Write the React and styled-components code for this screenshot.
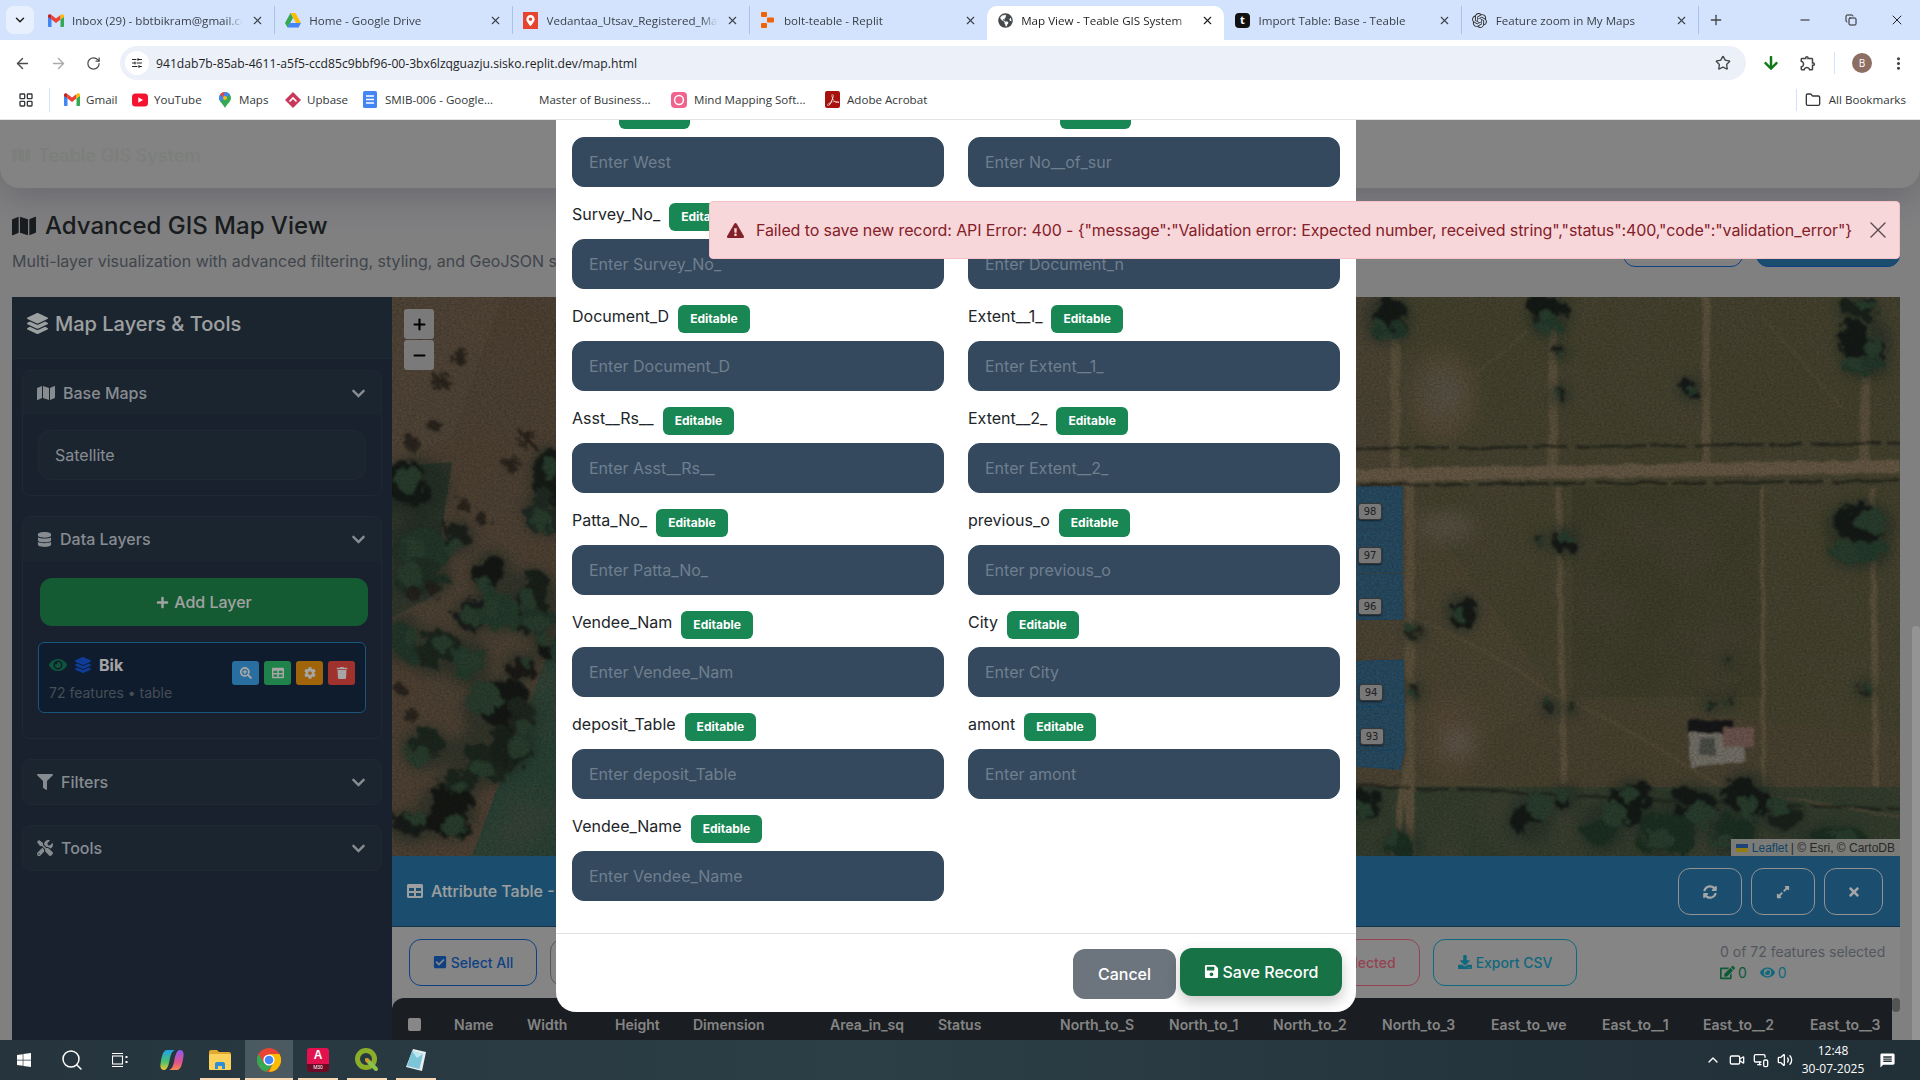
import styled, { createGlobalStyle } from "styled-components";
import {
  FaMap, FaLayerGroup, FaDatabase, FaFilter, FaTools, FaChevronDown, FaPlus, FaEye,
  FaSearchPlus, FaTable, FaCog, FaTrash, FaSave, FaCheckSquare, FaDownload, FaEdit,
  FaSyncAlt, FaExpandAlt, FaTimes, FaExclamationTriangle, FaGlobeAmericas, FaWindows,
  FaArrowDown, FaMapMarkerAlt,
} from "react-icons/fa";
import { SiOpenai, SiAdobeacrobatreader } from "react-icons/si";
import { MdOutlineExtension, MdMoreVert, MdMessage } from "react-icons/md";
import {
  ArrowLeft, ArrowRight, RotateCw, Star, SlidersHorizontal, Minus, Copy, X, Plus, ChevronDown,
  LayoutGrid, Folder, Search, ChevronUp, Video, MonitorSmartphone, Volume2,
} from "lucide-react";

const GlobalStyle = createGlobalStyle`
  html, body { margin: 0; padding: 0; background: #fff; overflow: hidden; }
  * { box-sizing: border-box; }
  input::placeholder { color: #6f7f8e; opacity: 1; }
`;

const chromeFont = `"Open Sans", "Noto Sans", sans-serif`;
const pageFont = `Inter, "Liberation Sans", sans-serif`;

const Root = styled.div`
  width: 1920px;
  height: 1080px;
  display: flex;
  flex-direction: column;
  overflow: hidden;
  font-family: ${pageFont};
`;

/* browser chrome */
const TabStrip = styled.div`
  height: 40px;
  flex: none;
  background: #d3e3fd;
  display: flex;
  align-items: center;
  padding-left: 6px;
  font-family: ${chromeFont};
`;

const TabMenu = styled.div`
  width: 28px;
  height: 28px;
  margin-right: 4px;
  border-radius: 8px;
  background: #e9f0fd;
  display: flex;
  align-items: center;
  justify-content: center;
  color: #1f1f1f;
`;

const Tab = styled.div`
  position: relative;
  width: 237.3px;
  height: ${(p) => (p.$active ? "34px" : "28px")};
  margin-top: ${(p) => (p.$active ? "6px" : "0")};
  padding: ${(p) => (p.$active ? "0 10px 6px" : "0 10px")};
  display: flex;
  align-items: center;
  gap: 8px;
  font-size: 11.6px;
  color: ${(p) => (p.$active ? "#1f1f1f" : "#3b4148")};
  background: ${(p) => (p.$active ? "#fff" : "transparent")};
  border-radius: ${(p) => (p.$active ? "10px 10px 0 0" : "0")};
  border-right: ${(p) => (p.$sep ? "1px solid #a8c2ea" : "none")};
`;

const TabIcon = styled.span`
  width: 16px;
  height: 16px;
  flex: none;
  display: flex;
  align-items: center;
  justify-content: center;
`;

const TabTitle = styled.span`
  flex: 1;
  white-space: nowrap;
  overflow: hidden;
  -webkit-mask-image: linear-gradient(90deg, #000 90%, transparent);
  mask-image: linear-gradient(90deg, #000 90%, transparent);
`;

const NewTab = styled.div`
  width: 34px;
  display: flex;
  justify-content: center;
  color: #444;
`;

const WindowControls = styled.div`
  margin-left: auto;
  display: flex;
  color: #222;
`;

const WindowButton = styled.div`
  width: 46px;
  height: 40px;
  display: flex;
  align-items: center;
  justify-content: center;
`;

const Toolbar = styled.div`
  height: 40px;
  flex: none;
  background: #fff;
  display: flex;
  align-items: center;
  padding: 6px 0 0 12px;
  color: #4a4d50;
  font-family: ${chromeFont};
`;

const NavButtons = styled.div`
  width: 108px;
  padding-left: 2px;
  display: flex;
  gap: 19px;
  align-items: center;
`;

const Omnibox = styled.div`
  width: 1626px;
  height: 34px;
  border-radius: 17px;
  background: #ebf0f9;
  display: flex;
  align-items: center;
  padding: 0 15px 0 5px;
  font-size: 12.15px;
  color: #1f1f1f;
`;

const SiteInfo = styled.span`
  width: 24px;
  height: 24px;
  margin-right: 7px;
  border-radius: 50%;
  background: #fff;
  display: flex;
  align-items: center;
  justify-content: center;
`;

const Url = styled.span`
  flex: 1;
`;

const ExtensionBar = styled.div`
  flex: 1;
  display: flex;
  align-items: center;
  padding-left: 17px;
  gap: 17px;
`;

const DownloadArrow = styled(FaArrowDown)`
  margin-right: 3px;
`;

const BarSep = styled.span`
  width: 1px;
  height: 22px;
  background: #d3e3fd;
`;

const Avatar = styled.span`
  width: 20px;
  height: 20px;
  border-radius: 50%;
  background: #8d6e63;
  color: #fff;
  font-size: 10px;
  display: flex;
  align-items: center;
  justify-content: center;
`;

const Bookmarks = styled.div`
  height: 40px;
  flex: none;
  background: #fff;
  border-bottom: 1px solid #e3e3e3;
  display: flex;
  align-items: center;
  padding-left: 18px;
  font-family: ${chromeFont};
  font-size: 11.6px;
  color: #33373a;
`;

const AppsSep = styled.span`
  width: 1px;
  height: 24px;
  margin: 0 6px 0 15px;
  background: #d3e3fd;
`;

const Bookmark = styled.div`
  width: ${(p) => p.$w}px;
  flex: none;
  padding-left: 8px;
  display: flex;
  align-items: center;
  gap: ${(p) => p.$gap ?? 6}px;
  white-space: nowrap;
`;

const AllBookmarks = styled.div`
  margin-left: auto;
  padding-right: 14px;
  display: flex;
  align-items: center;
  gap: 8px;
`;

const Viewport = styled.div`
  position: relative;
  flex: 1;
  min-height: 0;
  overflow: hidden;
  background: #c5c5c7;
`;

/* page behind the dialog */
const HeaderCard = styled.div`
  height: 68px;
  padding: 2px 12px 0;
  display: flex;
  align-items: center;
  gap: 8px;
  background: #c8c9c8;
  border-radius: 0 0 20px 20px;
  box-shadow: 0 8px 34px rgba(30, 30, 70, 0.22);
  color: #c0c3c1;
  font-size: 18px;
  font-weight: 600;
`;

const PageHead = styled.div`
  height: 109px;
  padding: 21px 20px 0 12px;
  display: flex;
  justify-content: space-between;
`;

const PageTitle = styled.h1`
  margin: 0;
  display: flex;
  align-items: center;
  gap: 9px;
  font-size: 24px;
  font-weight: 500;
  line-height: 34px;
  color: #262b2e;
`;

const PageSub = styled.p`
  margin: 8px 0 0;
  font-size: 16px;
  line-height: 20px;
  color: #646c73;
  white-space: nowrap;
`;

const HeadActions = styled.div`
  display: flex;
  gap: 13px;
  padding-top: 16px;
`;

const HeadButton = styled.div`
  width: ${(p) => p.$w}px;
  height: 42px;
  border-radius: 12px;
  border: 1px solid #1764c8;
  background: ${(p) => (p.$solid ? "#2a78a9" : "transparent")};
`;

const Workspace = styled.div`
  margin: 0 20px 0 12px;
  display: grid;
  grid-template-columns: 380px 1fr;
  height: 760px;
`;

const Sidebar = styled.aside`
  background: #253345;
  color: #d0d7df;
`;

const SidebarTitle = styled.div`
  height: 62px;
  padding: 0 15px 8px;
  display: flex;
  align-items: center;
  gap: 7px;
  background: #2a394a;
  border-bottom: 1px solid #303f51;
  font-size: 20px;
  font-weight: 500;
  color: #f2f6f8;
`;

const SectionList = styled.div`
  padding: 11px 10px;
  display: flex;
  flex-direction: column;
  gap: 20px;
`;

const Section = styled.section`
  border: 1px solid #303f51;
  border-radius: 8px;
  overflow: hidden;
`;

const SectionHead = styled.div`
  height: 44px;
  padding: 0 15px 0 14px;
  display: flex;
  align-items: center;
  gap: 8px;
  background: #2a394a;
  font-size: 16px;
  font-weight: 500;
`;

const SectionChevron = styled(FaChevronDown)`
  margin-left: auto;
`;

const SectionBody = styled.div`
  padding: ${(p) => p.$pad};
`;

const SelectBox = styled.div`
  height: 50px;
  padding: 0 16px;
  display: flex;
  align-items: center;
  border: 1px solid #303f51;
  border-radius: 12px;
  background: #2a394a;
  font-size: 16px;
`;

const AddLayer = styled.div`
  width: 328px;
  height: 48px;
  margin: 0 0 16px 2px;
  border-radius: 12px;
  background: #208a4d;
  color: #f6fbf8;
  font-size: 16px;
  font-weight: 500;
  display: flex;
  align-items: center;
  justify-content: center;
  gap: 5px;
`;

const LayerCard = styled.div`
  height: 71px;
  padding: 0 10px;
  display: flex;
  align-items: center;
  justify-content: space-between;
  background: #172b47;
  border: 1px solid #2683c0;
  border-radius: 6px;
`;

const LayerName = styled.div`
  display: flex;
  align-items: center;
  gap: 8px;
  color: #fdfdfd;
  font-size: 16px;
  font-weight: 700;
`;

const LayerMeta = styled.div`
  margin-top: 9px;
  font-size: 14px;
  color: #6c7883;
`;

const LayerActions = styled.div`
  margin-bottom: 9px;
  display: flex;
  gap: 5px;
`;

const LayerAction = styled.div`
  width: 27px;
  height: 24px;
  border-radius: 3px;
  background: ${(p) => p.$bg};
  color: #fff;
  font-size: 12px;
  display: flex;
  align-items: center;
  justify-content: center;
`;

const MainColumn = styled.div`
  min-width: 0;
  display: flex;
  flex-direction: column;
`;

const MapPane = styled.div`
  position: relative;
  height: 559px;
  flex: none;
  overflow: hidden;
  background: #876f59;
`;

const MapCanvas = styled.svg`
  display: block;
  width: 100%;
  height: 100%;
`;

const ZoomControls = styled.div`
  position: absolute;
  left: 12px;
  top: 12px;
  display: flex;
  flex-direction: column;
  gap: 1px;
`;

const ZoomButton = styled.div`
  width: 30px;
  height: 30px;
  border-radius: 3px;
  background: #bcbcbc;
  color: #000;
  display: flex;
  align-items: center;
  justify-content: center;
`;

const Attribution = styled.div`
  position: absolute;
  right: 0;
  bottom: 0;
  height: 17px;
  padding: 0 5px;
  display: flex;
  align-items: center;
  gap: 3px;
  background: #bdbdb9;
  font-family: "Liberation Sans", sans-serif;
  font-size: 12px;
  color: #3d3d3d;
`;

const AttributionLink = styled.span`
  color: #17699b;
`;

const Flag = styled.svg`
  width: 12px;
  height: 8px;
  margin-right: 1px;
`;

const ParcelTag = styled.div`
  position: absolute;
  left: ${(p) => p.$x}px;
  top: ${(p) => p.$y}px;
  width: 24px;
  height: 17px;
  border-radius: 3px;
  border: 1px solid #555;
  background: #b8b8b8;
  box-shadow: 0 1px 2px rgba(0, 0, 0, 0.5);
  font-family: "DejaVu Sans", sans-serif;
  font-size: 10px;
  color: #333;
  display: flex;
  align-items: center;
  justify-content: center;
`;

const AttrHeader = styled.div`
  height: 70px;
  flex: none;
  padding: 0 17px 0 15px;
  display: flex;
  align-items: center;
  background: #2a78a9;
  color: #f0f4f6;
  font-size: 16px;
  font-weight: 500;
  gap: 8px;
`;

const AttrActions = styled.div`
  margin-left: auto;
  margin-top: 1px;
  display: flex;
  gap: 9px;
`;

const AttrAction = styled.div`
  width: ${(p) => p.$w}px;
  height: 47px;
  border: 1px solid #e0e0e0;
  border-radius: 12px;
  color: #fff;
  font-size: 14px;
  display: flex;
  align-items: center;
  justify-content: center;
`;

const AttrToolbar = styled.div`
  height: 72px;
  flex: none;
  padding: 0 15px 1px 17px;
  display: flex;
  align-items: center;
  background: #cdcdcd;
  border-top: 1px solid #1f4f70;
`;

const ToolGroup = styled.div`
  width: 1168px;
  display: flex;
  justify-content: space-between;
`;

const ToolCluster = styled.div`
  display: flex;
  gap: 13px;
`;

const ToolButton = styled.div`
  width: ${(p) => p.$w}px;
  height: 47px;
  border: 1px solid ${(p) => p.$color};
  border-radius: 12px;
  color: ${(p) => p.$color};
  font-size: 14px;
  font-weight: 500;
  white-space: nowrap;
  display: flex;
  align-items: center;
  justify-content: center;
  gap: 4px;
`;

const ToolStats = styled.div`
  margin-left: auto;
  width: 165px;
  font-size: 14px;
  line-height: 21px;
  color: #7e868f;
  white-space: nowrap;
`;

const StatLine = styled.div`
  display: flex;
  align-items: center;
  gap: 3px;
`;

const StatValue = styled.span`
  margin-right: 10px;
  color: ${(p) => p.$color};
`;

const TableHead = styled.div`
  height: 52px;
  margin-right: 8px;
  display: grid;
  grid-template-columns: 46px 73px 88px 78px 137px 108px 122px 109px 104px 109px 109px 111px 101px 107px 82px;
  align-items: center;
  padding-left: 16px;
  background: #282d33;
  border-radius: 12px 0 0 0;
  color: #cbcbcb;
  font-size: 14px;
  font-weight: 600;
  white-space: nowrap;
`;

const HeadCheck = styled.span`
  width: 13px;
  height: 13px;
  border-radius: 2px;
  background: #d0d0d0;
`;

const TableScroll = styled.div`
  position: absolute;
  left: 1892px;
  top: 878px;
  width: 8px;
  height: 14px;
  border-radius: 4px;
  background: #828282;
`;

const PageScroll = styled.div`
  position: absolute;
  right: 0;
  top: 506px;
  bottom: 0;
  width: 8px;
  border-radius: 5px 5px 0 0;
  background: #e4e4e4;
`;

/* dialog on top */
const Overlay = styled.div`
  position: absolute;
  inset: 0;
  background: rgba(0, 0, 0, 0.35);
  display: flex;
  justify-content: center;
  align-items: flex-end;
  padding: 0 8px 28px 0;
`;

const Modal = styled.div`
  width: 800px;
  flex: none;
  background: #fff;
  border-radius: 0 0 20px 20px;
  color: #212529;
`;

const ModalBody = styled.div`
  padding: 0 16px 32px;
  display: grid;
  grid-template-columns: 372px 372px;
  column-gap: 24px;
  row-gap: 16px;
`;

const Field = styled.div`
  display: flex;
  flex-direction: column;
  gap: 8px;
`;

const FieldLabel = styled.label`
  height: 28px;
  display: flex;
  align-items: flex-start;
  gap: 9px;
  font-size: 16px;
  line-height: 22px;
`;

const Badge = styled.span`
  height: 28px;
  padding: 0 12px;
  display: flex;
  align-items: center;
  border-radius: 6px;
  background: #198754;
  color: #fff;
  font-size: 12px;
  font-weight: 700;
`;

const FieldInput = styled.input`
  height: 50px;
  width: 100%;
  padding: 0 16px;
  border: 1px solid #34495e;
  border-radius: 12px;
  background: #34495e;
  color: #fff;
  font-family: ${pageFont};
  font-size: 16px;
  outline: none;
`;

const ModalFooter = styled.div`
  height: 79px;
  padding: 15px 14px 0 0;
  display: flex;
  justify-content: flex-end;
  align-items: flex-start;
  gap: 4px;
  border-top: 1px solid #dee2e6;
`;

const CancelButton = styled.button`
  width: 103px;
  height: 50px;
  border: none;
  border-radius: 12px;
  background: #6c757d;
  color: #fff;
  font-family: ${pageFont};
  font-size: 16px;
  font-weight: 500;
  padding-top: 1px;
`;

const SaveButton = styled.button`
  width: 162px;
  height: 48px;
  margin-top: -1px;
  padding-bottom: 2px;
  border: none;
  border-radius: 12px;
  background: #177245;
  box-shadow: 0 6px 14px rgba(0, 0, 0, 0.22);
  color: #fff;
  font-family: ${pageFont};
  font-size: 16px;
  font-weight: 500;
  display: flex;
  align-items: center;
  justify-content: center;
  gap: 4px;
`;

const Toast = styled.div`
  position: absolute;
  top: 81px;
  right: 20px;
  width: 1191px;
  height: 58px;
  padding: 0 14px 0 17px;
  display: flex;
  align-items: center;
  gap: 12px;
  background: #f8d7da;
  border: 1px solid #f5c2c7;
  border-radius: 4px;
  color: #842029;
  font-size: 16px;
  letter-spacing: -0.1px;
  white-space: nowrap;
`;

const ToastIcon = styled(FaExclamationTriangle)`
  flex: none;
`;

const ToastClose = styled(X)`
  margin-left: auto;
  color: #5a4a4c;
  flex: none;
`;

/* taskbar */
const Taskbar = styled.div`
  height: 40px;
  flex: none;
  display: flex;
  align-items: center;
  background: linear-gradient(90deg, #26353d, #2c3e46 45%, #212f37);
  color: #fff;
  font-family: ${chromeFont};
`;

const TaskSlot = styled.div`
  position: relative;
  width: ${(p) => p.$w}px;
  margin-left: ${(p) => p.$ml || 0}px;
  height: 40px;
  flex: none;
  display: flex;
  align-items: center;
  justify-content: center;
  background: ${(p) => (p.$active ? "#4b5960" : "transparent")};
  &::after {
    content: "";
    display: ${(p) => (p.$open ? "block" : "none")};
    position: absolute;
    left: 0;
    right: 0;
    bottom: 0;
    height: 2px;
    background: #fbd9b4;
  }
`;

const Tray = styled.div`
  margin-left: auto;
  display: flex;
  align-items: center;
  gap: 8px;
  padding-right: 24px;
`;

const Clock = styled.div`
  width: 64px;
  margin-right: 6px;
  text-align: center;
  font-size: 12px;
  line-height: 18px;
`;

const AcadBox = styled.span`
  width: 22px;
  height: 24px;
  border-radius: 3px;
  background: linear-gradient(180deg, #e3124f 68%, #6f0a26 68%);
  color: #fff;
  font-size: 12px;
  font-weight: 700;
  line-height: 15px;
  text-align: center;
  font-family: "Liberation Sans", sans-serif;
  display: flex;
  flex-direction: column;
`;

const AcadTag = styled.span`
  font-size: 5px;
  line-height: 9px;
  font-weight: 400;
`;

const TeableMark = styled.span`
  width: 15px;
  height: 15px;
  border-radius: 4px;
  background: #111;
  color: #fff;
  font-size: 11px;
  font-weight: 700;
  line-height: 14px;
  text-align: center;
`;

const IconSpacer = styled.span`
  width: 16px;
  height: 16px;
`;

const Glyph = styled.svg`
  display: block;
  flex: none;
`;

const GmailIcon = () => (
  <Glyph width="16" height="13" viewBox="0 0 16 13">
    <path d="M0 2v10c0 .6.4 1 1 1h2.5V5.5z" fill="#4285f4" />
    <path d="M16 2v10c0 .6-.4 1-1 1h-2.5V5.5z" fill="#34a853" />
    <path d="M3.5 5.5V1L8 4.5 12.5 1v4.5L8 9z" fill="#ea4335" />
    <path d="M0 2c0-1.6 2-2.4 3.5-1v4.5L0 3z" fill="#c5221f" />
    <path d="M16 2c0-1.6-2-2.4-3.5-1v4.5L16 3z" fill="#fbbc04" />
  </Glyph>
);

const DriveIcon = () => (
  <Glyph width="16" height="15" viewBox="0 0 16 15">
    <path d="M5.5 0h5l5.5 10h-5z" fill="#fbbc04" />
    <path d="M5.5 0L0 10l2.5 4.5L8 5z" fill="#34a853" />
    <path d="M5 10h11l-2.5 4.5h-11z" fill="#4285f4" />
  </Glyph>
);

const ReplitIcon = () => (
  <Glyph width="13" height="16" viewBox="0 0 13 16" fill="#f26207">
    <rect x="0" y="0" width="6" height="5" rx="1" />
    <rect x="6" y="5.5" width="7" height="5" rx="1" />
    <rect x="0" y="11" width="6" height="5" rx="1" />
  </Glyph>
);

const PinTile = styled.span`
  width: 15px;
  height: 17px;
  background: #e5452f;
  color: #fff;
  font-size: 11px;
  display: flex;
  align-items: center;
  justify-content: center;
`;

const YoutubeIcon = () => (
  <Glyph width="16" height="16" viewBox="0 0 16 16">
    <rect y="1.5" width="16" height="13" rx="3.5" fill="#f4142f" />
    <path d="M6.3 5.2v5.6L11 8z" fill="#fff" />
  </Glyph>
);

const MapsIcon = () => (
  <Glyph width="12" height="16" viewBox="0 0 12 16">
    <path d="M6 0a6 6 0 0 1 6 6c0 3.5-4 6-6 10-2-4-6-6.5-6-10a6 6 0 0 1 6-6z" fill="#34a853" />
    <path d="M6 0a6 6 0 0 1 5 2.6L2 9.4C.8 8.3 0 7.2 0 6a6 6 0 0 1 6-6z" fill="#4285f4" />
    <path d="M6 0a6 6 0 0 0-5 2.6L4 5z" fill="#ea4335" />
    <circle cx="6" cy="6" r="2" fill="#fbbc04" />
  </Glyph>
);

const UpbaseIcon = () => (
  <Glyph width="16" height="16" viewBox="0 0 16 16">
    <path d="M8 0l8 8-8 8-8-8z" fill="#c8385c" />
    <path d="M4.5 9.5L8 6l3.5 3.5" fill="none" stroke="#fff" strokeWidth="1.6" />
  </Glyph>
);

const DocsIcon = () => (
  <Glyph width="14" height="17" viewBox="0 0 14 17">
    <rect width="14" height="17" rx="1.5" fill="#4285f4" />
    <path d="M3 5h8M3 8.5h8M3 12h8" stroke="#fff" strokeWidth="1.5" />
  </Glyph>
);

const MindIcon = () => (
  <Glyph width="16" height="16" viewBox="0 0 16 16">
    <rect width="16" height="16" rx="4" fill="#f0638c" />
    <circle cx="8" cy="8" r="4.4" fill="none" stroke="#fff" strokeWidth="1.5" />
  </Glyph>
);

const AcrobatTile = styled.span`
  width: 15px;
  height: 17px;
  border-radius: 2px;
  background: #a8120d;
  color: #fff;
  font-size: 12px;
  display: flex;
  align-items: center;
  justify-content: center;
`;

const CopilotIcon = () => (
  <Glyph width="24" height="24" viewBox="0 0 24 24">
    <defs>
      <linearGradient id="cpA" x1="0" y1="0" x2="0" y2="1">
        <stop offset="0" stopColor="#1fa2e8" />
        <stop offset="0.6" stopColor="#4fc16c" />
        <stop offset="1" stopColor="#f6c431" />
      </linearGradient>
      <linearGradient id="cpB" x1="0" y1="0" x2="0" y2="1">
        <stop offset="0" stopColor="#8a5cf0" />
        <stop offset="0.6" stopColor="#e0518f" />
        <stop offset="1" stopColor="#f58a4a" />
      </linearGradient>
    </defs>
    <path d="M7 2h8c-3 1-4 4-5 8-1 5-2 12-6 12-3 0-4-3-3.500-6C1.500 9 3 2 7 2z" fill="url(#cpA)" />
    <path d="M17 22H9c3-1 4-4 5-8 1-5 2-12 6-12 3 0 4 3 3.500 6-1 7-2.500 14-6.500 14z" fill="url(#cpB)" />
  </Glyph>
);

const ExplorerIcon = () => (
  <Glyph width="22" height="20" viewBox="0 0 22 20">
    <path d="M0 2c0-1 .6-2 2-2h6l2 2h10c1 0 2 .8 2 2v14c0 1-1 2-2 2H2c-1 0-2-1-2-2z" fill="#e3a92e" />
    <rect y="4" width="22" height="16" rx="1.500" fill="#fbd35c" />
    <path d="M6 19v-5c0-1 .7-2 2-2h6c1.300 0 2 1 2 2v5h-3v-3H9v3z" fill="#2d8fd9" />
  </Glyph>
);

const ChromeIcon = () => (
  <Glyph width="24" height="24" viewBox="0 0 24 24">
    <circle cx="12" cy="12" r="12" fill="#ea4335" />
    <path d="M12 24A12 12 0 0 1 1.600 6l5.800 10 4 .5 3.600 1.500L9.500 23.700z" fill="#34a853" />
    <path d="M12 24a12 12 0 0 0 10.400-18H12l4.200 8.500z" fill="#fbbc04" />
    <circle cx="12" cy="12" r="5.600" fill="#fff" />
    <circle cx="12" cy="12" r="4.300" fill="#4285f4" />
  </Glyph>
);

const QgisIcon = () => (
  <Glyph width="24" height="24" viewBox="0 0 24 24">
    <circle cx="11" cy="11" r="8.500" fill="none" stroke="#8bae2a" strokeWidth="5" />
    <path d="M12 12l9 9" stroke="#8bc34a" strokeWidth="4" strokeLinecap="round" />
    <path d="M10 10l5 2-3 3z" fill="#f08a24" />
  </Glyph>
);

const NotepadIcon = () => (
  <Glyph width="22" height="24" viewBox="0 0 22 24">
    <path d="M8 1l13 3-4 19-16-4z" fill="#e8eef0" />
    <path d="M7 3l11 3-3.500 15L2 18z" fill="#7cc4d8" />
    <path d="M7 3l11 3-6 4z" fill="#bfe6ef" />
  </Glyph>
);

const TaskViewIcon = () => (
  <Glyph width="16" height="16" viewBox="0 0 16 16" fill="none" stroke="#fff" strokeWidth="1.100">
    <rect x="0.500" y="4" width="10" height="8" />
    <path d="M0 1.500h11M0 14.500h11" />
    <rect x="13.500" y="4" width="2" height="2" fill="#fff" stroke="none" />
    <rect x="13.500" y="9" width="2" height="2" fill="#fff" stroke="none" />
  </Glyph>
);

const hedges = [
  "M948 152 L1508 146", "M968 188 L1508 184", "M948 488 L1100 494 L1300 505 L1508 512",
];

const track = [
  ["M1003 0 L1003 170", 9], ["M1161 0 L1161 170", 9], ["M1314 0 L1314 170", 8], ["M1473 0 L1473 170", 9],
  ["M1166 190 L1172 488", 6], ["M1480 190 L1484 490", 6], ["M1018 170 L1018 559", 9],
  ["M1370 190 L1372 488", 4], ["M1018 450 L1002 559", 7],
];

/* clumps of tree crowns: x, y, rx, ry, colour */
const leftCrowns = [
  [23, 190, 30, 26, "#232b26"], [28, 250, 26, 24, "#3a5c46"], [30, 280, 26, 18, "#34503e"], [100, 277, 18, 20, "#222723"],
  [140, 303, 24, 27, "#29352c"], [156, 180, 15, 27, "#262e28"], [153, 215, 18, 20, "#34473a"], [82, 318, 17, 16, "#2c322d"],
  [108, 310, 18, 22, "#3e644a"], [145, 325, 22, 14, "#3a5846"], [41, 355, 24, 20, "#2e4031"], [75, 365, 20, 20, "#3e644a"],
  [12, 342, 16, 22, "#3a5c46"], [128, 370, 14, 12, "#2e2a26"], [154, 350, 11, 12, "#232523"], [105, 413, 30, 28, "#232824"],
  [92, 460, 30, 26, "#2e4031"], [120, 450, 20, 20, "#2c382f"], [35, 452, 22, 18, "#2e4031"], [55, 515, 26, 25, "#232823"],
  [20, 530, 20, 14, "#272e29"], [70, 485, 18, 12, "#2e4031"], [130, 420, 14, 18, "#323f36"], [65, 240, 15, 14, "#2d342e"],
];

const palms = [
  [68, 60, 10], [48, 84, 11], [135, 142, 11], [120, 168, 9], [70, 208, 7], [90, 222, 7],
  [20, 146, 8], [42, 128, 7], [20, 295, 7], [42, 293, 7], [8, 392, 5], [20, 420, 8],
];

const rightCrowns = [
  [996, 21, 20, 21, "#232b26"], [996, 35, 18, 10, "#3a5c46"], [1157, 15, 18, 17, "#232b26"], [1157, 30, 16, 8, "#3e644a"],
  [1466, 12, 18, 11, "#2a382f"], [1473, 46, 23, 24, "#232b26"], [1473, 70, 20, 10, "#3a5c46"], [1299, 92, 10, 10, "#25292a"],
  [1168, 98, 8, 8, "#33332c"], [1168, 55, 7, 6, "#33332c"], [1468, 230, 30, 23, "#232b26"], [1468, 255, 27, 14, "#3e644a"],
  [1172, 244, 12, 13, "#282c26"], [1148, 244, 4, 6, "#33332c"], [1070, 315, 14, 16, "#252b27"], [1023, 335, 8, 8, "#3a3e33"],
  [1022, 395, 7, 8, "#3a3e33"], [1157, 410, 7, 8, "#3a3e33"], [1179, 412, 6, 6, "#3a3e33"], [1318, 408, 6, 6, "#3a3e33"],
  [1337, 404, 5, 5, "#3a3e33"], [1335, 363, 4, 4, "#3a3e33"], [1473, 392, 7, 8, "#3a3e33"],
  [1137, 523, 20, 20, "#232b26"], [1174, 501, 11, 12, "#232b26"], [1240, 505, 20, 20, "#232b26"], [1300, 510, 24, 20, "#232b26"],
  [1355, 500, 22, 22, "#232b26"], [1210, 530, 20, 20, "#2e4f38"], [1274, 538, 26, 20, "#2e4f38"], [1340, 538, 22, 18, "#2e4f38"],
  [974, 508, 15, 15, "#232b26"], [1392, 518, 18, 14, "#2a382f"], [1010, 548, 15, 14, "#2e4f38"], [1440, 545, 30, 14, "#2e4f38"],
];

// break every crown into a few lumps so that nothing reads as a plain ellipse
function lumps(crowns) {
  let seed = 1234;
  const rand = () => {
    seed = (seed * 16807) % 2147483647;
    return seed / 2147483647;
  };
  return crowns.flatMap(([cx, cy, rx, ry, fill]) => {
    const count = rx > 12 ? 8 : 4;
    return Array.from({ length: count }, (_, i) => ({
      key: `${cx}-${cy}-${i}`,
      cx: cx + (rand() - 0.5) * rx * 1.3,
      cy: cy + (rand() - 0.5) * ry * 1.3,
      rx: rx * (0.35 + rand() * 0.3),
      ry: ry * (0.35 + rand() * 0.3),
      fill: i === count - 1 ? "#44684e" : fill,
    }));
  });
}

const crownLumps = lumps([...leftCrowns, ...rightCrowns]);

const parcels = [
  "M948 190 L1010 190 L1010 232 L948 232Z",
  "M948 234 L1010 233 L1010 275 L948 275Z",
  "M948 277 L1010 277 L1011 322 L948 323Z",
  "M948 365 L1011 363 L1012 409 L948 410Z",
  "M948 411 L1012 409 L1012 452 L948 453Z",
  "M948 455 L1012 453 L1008 472 L948 468Z",
];

const tags = [
  ["98", 966, 206], ["97", 966, 250], ["96", 966, 301], ["94", 967, 387], ["93", 968, 431],
];

function SatelliteMap() {
  return (
    <MapCanvas viewBox="0 0 1508 559" preserveAspectRatio="none">
      <defs>
        <filter id="grain" x="0" y="0" width="100%" height="100%">
          <feTurbulence type="fractalNoise" baseFrequency="0.4 0.55" numOctaves="3" seed="4" />
          <feColorMatrix values="0 0 0 0 0 0 0 0 0 0 0 0 0 0 0 1.100 0 0 0 -0.22" />
        </filter>
        <filter id="patches" x="0" y="0" width="100%" height="100%">
          <feTurbulence type="fractalNoise" baseFrequency="0.014" numOctaves="4" seed="11" />
          <feColorMatrix values="0 0 0 0 0.22 0 0 0 0 0.18 0 0 0 0 0.12 1.800 0 0 0 -0.62" />
        </filter>
        <filter id="rough" x="-20%" y="-20%" width="140%" height="140%">
          <feTurbulence type="fractalNoise" baseFrequency="0.1" numOctaves="3" seed="7" result="n" />
          <feDisplacementMap in="SourceGraphic" in2="n" scale="16" result="d" />
          <feGaussianBlur in="d" stdDeviation="1.200" />
        </filter>
        <filter id="halo" x="-20%" y="-20%" width="140%" height="140%">
          <feGaussianBlur stdDeviation="6" />
        </filter>
        <filter id="soft" x="-30%" y="-30%" width="160%" height="160%">
          <feGaussianBlur stdDeviation="9" />
        </filter>
        <filter id="lineRough" x="-5%" y="-5%" width="110%" height="110%">
          <feTurbulence type="fractalNoise" baseFrequency="0.05" numOctaves="2" seed="3" result="n" />
          <feDisplacementMap in="SourceGraphic" in2="n" scale="5" result="d" />
          <feGaussianBlur in="d" stdDeviation="0.900" />
        </filter>
      </defs>

      <rect x="0" y="0" width="170" height="559" fill="#876f59" />
      <path d="M0 0H110L60 140 0 165Z" fill="#8d7660" />
      <path d="M166 330L80 559H170Z" fill="#47705c" />
      <path d="M0 170 L60 165 L40 300 L0 320Z" fill="#4a5a48" />

      <rect x="164" y="0" width="784" height="559" fill="#876f59" />
      <rect x="948" y="0" width="560" height="559" fill="#75714f" />
      <path d="M948 0H1000V160H948ZM948 160H1020V559H948Z" fill="#83755a" />
      <path d="M1020 200L1165 400L1170 488H1020Z" fill="#807456" />
      <path d="M1180 190L1370 190L1370 400L1180 400Z" fill="#6a6849" />
      <path d="M1180 400L1508 440V512L1000 480Z" fill="#7c7052" />
      <path d="M948 490H1508V559H948Z" fill="#55684d" />
      <ellipse cx="1050" cy="100" rx="34" ry="44" fill="#94805f" filter="url(#soft)" />
      <ellipse cx="1050" cy="95" rx="20" ry="24" fill="#9c9280" filter="url(#soft)" opacity="0.8" />
      <ellipse cx="1055" cy="230" rx="28" ry="14" fill="#a39883" filter="url(#soft)" opacity="0.8" />
      <ellipse cx="1060" cy="440" rx="30" ry="42" fill="#917a5f" filter="url(#soft)" />
      <ellipse cx="1066" cy="445" rx="14" ry="14" fill="#a99f8e" filter="url(#soft)" opacity="0.8" />

      <rect width="1508" height="559" filter="url(#patches)" opacity="0.45" />

      <g filter="url(#lineRough)">
        {track.map(([d, w]) => (
          <path key={d} d={d} stroke="#9c8a68" strokeWidth={w} fill="none" />
        ))}
        <path d="M948 172 L1508 163 L1508 176 L948 185Z" fill="#ae9674" />
        <path d="M1020 320 C1120 360 1150 395 1170 400 C1260 440 1320 490 1340 492 L1508 520" stroke="#9a8664" strokeWidth="1.600" fill="none" />
        <path d="M1080 80 L1140 32" stroke="#94865f" strokeWidth="1.500" fill="none" />
        <path d="M1370 20 L1450 110" stroke="#94865f" strokeWidth="1.200" fill="none" />
        {hedges.map((d) => (
          <path key={d} d={d} stroke="#2c2e24" strokeWidth="2.500" strokeDasharray="70 5 34 9" opacity="0.8" fill="none" />
        ))}
      </g>

      <g filter="url(#halo)" opacity="0.55">
        {[...leftCrowns, ...rightCrowns].map(([cx, cy, rx, ry]) => (
          <ellipse key={`${cx}-${cy}`} cx={cx} cy={cy} rx={rx * 1.1 + 2} ry={ry * 1.1 + 2} fill="#33483a" />
        ))}
      </g>

      <g filter="url(#rough)">
        {crownLumps.map(({ key, ...lump }) => (
          <ellipse key={key} {...lump} />
        ))}
        {palms.map(([cx, cy, r]) => (
          <path
            key={`${cx}-${cy}`}
            d={`M${cx - r} ${cy}L${cx + r} ${cy}M${cx} ${cy - r}L${cx} ${cy + r}M${cx - r * 0.7} ${cy - r * 0.7}L${cx + r * 0.7} ${cy + r * 0.7}M${cx - r * 0.7} ${cy + r * 0.7}L${cx + r * 0.7} ${cy - r * 0.7}`}
            stroke="#3a3228"
            strokeWidth="3.500"
            opacity="0.85"
            fill="none"
          />
        ))}
      </g>

      <g filter="url(#lineRough)">
        <path d="M1296 435 H1350 L1354 464 L1298 470Z" fill="#c6c0b2" />
        <path d="M1296 423 H1340 V436 H1296Z" fill="#25262a" />
        <path d="M1330 430 H1362 V450 H1332Z" fill="#b99086" />
        <rect x="1308" y="441" width="16" height="18" fill="#7f8378" />
      </g>

      {parcels.map((d) => (
        <path key={d} d={d} fill="#3683b9" fillOpacity="0.82" stroke="#2f7fb8" strokeWidth="1.200" />
      ))}

      <rect width="1508" height="559" filter="url(#grain)" opacity="0.32" />
      <rect width="1508" height="559" fill="#1a1a10" opacity="0.1" />
    </MapCanvas>
  );
}

const tabs = [
  { title: "Inbox (29) - bbtbikram@gmail.com", icon: <GmailIcon />, sep: true },
  { title: "Home - Google Drive", icon: <DriveIcon />, sep: true },
  { title: "Vedantaa_Utsav_Registered_Map", icon: <PinTile><FaMapMarkerAlt /></PinTile>, sep: true },
  { title: "bolt-teable - Replit", icon: <ReplitIcon /> },
  { title: "Map View - Teable GIS System", icon: <FaGlobeAmericas size={15} color="#45494d" />, active: true },
  { title: "Import Table: Base - Teable", icon: <TeableMark>t</TeableMark>, sep: true },
  { title: "Feature zoom in My Maps", icon: <SiOpenai size={15} color="#333" />, sep: true },
];

const bookmarks = [
  { label: "Gmail", icon: <GmailIcon />, w: 68 },
  { label: "YouTube", icon: <YoutubeIcon />, w: 87 },
  { label: "Maps", icon: <MapsIcon />, w: 66, gap: 8 },
  { label: "Upbase", icon: <UpbaseIcon />, w: 78 },
  { label: "SMIB-006 - Google...", icon: <DocsIcon />, w: 160, gap: 8 },
  { label: "Master of Business...", icon: <IconSpacer />, w: 148, gap: 0 },
  { label: "Mind Mapping Soft...", icon: <MindIcon />, w: 154, gap: 7 },
  { label: "Adobe Acrobat", icon: <AcrobatTile><SiAdobeacrobatreader /></AcrobatTile>, w: 120, gap: 7 },
];

const fields = [
  "West", "No__of_sur", "Survey_No_", "Document_n", "Document_D", "Extent__1_", "Asst__Rs__", "Extent__2_",
  "Patta_No_", "previous_o", "Vendee_Nam", "City", "deposit_Table", "amont", "Vendee_Name",
];

const columns = [
  "Name", "Width", "Height", "Dimension", "Area_in_sq", "Status", "North_to_S", "North_to_1", "North_to_2",
  "North_to_3", "East_to_we", "East_to__1", "East_to__2", "East_to__3",
];

const errorText =
  'Failed to save new record: API Error: 400 - {"message":"Validation error: Expected number, received string","status":400,"code":"validation_error"}';

export default function App() {
  return (
    <Root>
      <GlobalStyle />

      <TabStrip>
        <TabMenu><ChevronDown size={14} strokeWidth={2.5} /></TabMenu>
        {tabs.map((t) => (
          <Tab key={t.title} $active={t.active} $sep={t.sep}>
            <TabIcon>{t.icon}</TabIcon>
            <TabTitle>{t.title}</TabTitle>
            <X size={13} />
          </Tab>
        ))}
        <NewTab><Plus size={16} /></NewTab>
        <WindowControls>
          <WindowButton><Minus size={14} /></WindowButton>
          <WindowButton><Copy size={12} /></WindowButton>
          <WindowButton><X size={16} strokeWidth={1.5} /></WindowButton>
        </WindowControls>
      </TabStrip>

      <Toolbar>
        <NavButtons>
          <ArrowLeft size={17} />
          <ArrowRight size={17} color="#a9acaf" />
          <RotateCw size={15} />
        </NavButtons>
        <Omnibox>
          <SiteInfo><SlidersHorizontal size={12} /></SiteInfo>
          <Url>941dab7b-85ab-4611-a5f5-ccd85c9bbf96-00-3bx6lzqguazju.sisko.replit.dev/map.html</Url>
          <Star size={16} color="#444" />
        </Omnibox>
        <ExtensionBar>
          <DownloadArrow size={16} color="#0f7a17" />
          <MdOutlineExtension size={18} color="#444" />
          <BarSep />
          <Avatar>B</Avatar>
          <MdMoreVert size={19} color="#444" />
        </ExtensionBar>
      </Toolbar>

      <Bookmarks>
        <LayoutGrid size={16} />
        <AppsSep />
        {bookmarks.map((b) => (
          <Bookmark key={b.label} $w={b.w} $gap={b.gap}>
            {b.icon}
            {b.label}
          </Bookmark>
        ))}
        <AllBookmarks>
          <BarSep />
          <Folder size={16} />
          All Bookmarks
        </AllBookmarks>
      </Bookmarks>

      <Viewport>
        <HeaderCard>
          <FaMap size={18} />
          Teable GIS System
        </HeaderCard>

        <PageHead>
          <div>
            <PageTitle><FaMap size={24} /> Advanced GIS Map View</PageTitle>
            <PageSub>Multi-layer visualization with advanced filtering, styling, and GeoJSON support</PageSub>
          </div>
          <HeadActions>
            <HeadButton $w={120} />
            <HeadButton $w={144} $solid />
          </HeadActions>
        </PageHead>

        <Workspace>
          <Sidebar>
            <SidebarTitle><FaLayerGroup size={21} /> Map Layers &amp; Tools</SidebarTitle>
            <SectionList>
              <Section>
                <SectionHead><FaMap size={18} /> Base Maps <SectionChevron size={15} /></SectionHead>
                <SectionBody $pad="15px 15px 15px">
                  <SelectBox>Satellite</SelectBox>
                </SectionBody>
              </Section>
              <Section>
                <SectionHead><FaDatabase size={15} /> Data Layers <SectionChevron size={15} /></SectionHead>
                <SectionBody $pad="17px 15px 25px">
                  <AddLayer><FaPlus size={13} /> Add Layer</AddLayer>
                  <LayerCard>
                    <div>
                      <LayerName>
                        <FaEye size={18} color="#17835c" />
                        <FaLayerGroup size={16} color="#175ce6" />
                        Bik
                      </LayerName>
                      <LayerMeta>72 features • table</LayerMeta>
                    </div>
                    <LayerActions>
                      <LayerAction $bg="#3ea9f6"><FaSearchPlus /></LayerAction>
                      <LayerAction $bg="#31c873"><FaTable /></LayerAction>
                      <LayerAction $bg="#f69a12"><FaCog /></LayerAction>
                      <LayerAction $bg="#f64d45"><FaTrash /></LayerAction>
                    </LayerActions>
                  </LayerCard>
                </SectionBody>
              </Section>
              <Section>
                <SectionHead><FaFilter size={16} /> Filters <SectionChevron size={15} /></SectionHead>
              </Section>
              <Section>
                <SectionHead><FaTools size={16} /> Tools <SectionChevron size={15} /></SectionHead>
              </Section>
            </SectionList>
          </Sidebar>

          <MainColumn>
            <MapPane>
              <SatelliteMap />
              <ZoomControls>
                <ZoomButton><Plus size={17} strokeWidth={3} /></ZoomButton>
                <ZoomButton><Minus size={17} strokeWidth={3} /></ZoomButton>
              </ZoomControls>
              {tags.map(([label, x, y]) => (
                <ParcelTag key={label} $x={x} $y={y}>{label}</ParcelTag>
              ))}
              <Attribution>
                <Flag viewBox="0 0 12 8">
                  <rect width="12" height="4" fill="#2a68b8" />
                  <rect y="4" width="12" height="4" fill="#e0c020" />
                </Flag>
                <AttributionLink>Leaflet</AttributionLink> | © Esri, © CartoDB
              </Attribution>
            </MapPane>

            <AttrHeader>
              <FaTable size={16} /> Attribute Table - Bik
              <AttrActions>
                <AttrAction $w={64}><FaSyncAlt /></AttrAction>
                <AttrAction $w={64}><FaExpandAlt /></AttrAction>
                <AttrAction $w={59}><FaTimes /></AttrAction>
              </AttrActions>
            </AttrHeader>

            <AttrToolbar>
              <ToolGroup>
                <ToolCluster>
                  <ToolButton $w={128} $color="#1764c8"><FaCheckSquare size={14} /> Select All</ToolButton>
                  <ToolButton $w={128} $color="#7c858c">Clear All</ToolButton>
                </ToolCluster>
                <ToolCluster>
                  <ToolButton $w={171} $color="#e4687c"><FaTrash size={13} /> Delete Selected</ToolButton>
                  <ToolButton $w={144} $color="#17a0c0"><FaDownload size={14} /> Export CSV</ToolButton>
                </ToolCluster>
              </ToolGroup>
              <ToolStats>
                0 of 72 features selected
                <StatLine>
                  <FaEdit size={15} color="#148a54" />
                  <StatValue $color="#148a54">0</StatValue>
                  <FaEye size={15} color="#17a0c0" />
                  <StatValue $color="#17a0c0">0</StatValue>
                </StatLine>
              </ToolStats>
            </AttrToolbar>

            <TableHead>
              <HeadCheck />
              {columns.map((c) => <span key={c}>{c}</span>)}
            </TableHead>
          </MainColumn>
        </Workspace>

        <TableScroll />
        <PageScroll />

        <Overlay>
          <Modal>
            <ModalBody>
              {fields.map((f) => (
                <Field key={f}>
                  <FieldLabel>{f} <Badge>Editable</Badge></FieldLabel>
                  <FieldInput placeholder={`Enter ${f}`} />
                </Field>
              ))}
            </ModalBody>
            <ModalFooter>
              <CancelButton>Cancel</CancelButton>
              <SaveButton><FaSave size={15} /> Save Record</SaveButton>
            </ModalFooter>
          </Modal>
        </Overlay>

        <Toast>
          <ToastIcon size={17} />
          <span>{errorText}</span>
          <ToastClose size={28} strokeWidth={1.2} />
        </Toast>
      </Viewport>

      <Taskbar>
        <TaskSlot $w={48}><FaWindows size={16} /></TaskSlot>
        <TaskSlot $w={48}><Search size={24} strokeWidth={1.5} /></TaskSlot>
        <TaskSlot $w={48}><TaskViewIcon /></TaskSlot>
        <TaskSlot $w={56}><CopilotIcon /></TaskSlot>
        <TaskSlot $w={40} $open><ExplorerIcon /></TaskSlot>
        <TaskSlot $w={48} $ml={5} $open $active><ChromeIcon /></TaskSlot>
        <TaskSlot $w={40} $ml={5} $open><AcadBox>A<AcadTag>M30</AcadTag></AcadBox></TaskSlot>
        <TaskSlot $w={40} $ml={9} $open><QgisIcon /></TaskSlot>
        <TaskSlot $w={40} $ml={9} $open><NotepadIcon /></TaskSlot>
        <Tray>
          <ChevronUp size={16} />
          <Video size={16} />
          <MonitorSmartphone size={16} />
          <Volume2 size={16} />
          <Clock>12:48<br />30-07-2025</Clock>
          <MdMessage size={17} />
        </Tray>
      </Taskbar>
    </Root>
  );
}
